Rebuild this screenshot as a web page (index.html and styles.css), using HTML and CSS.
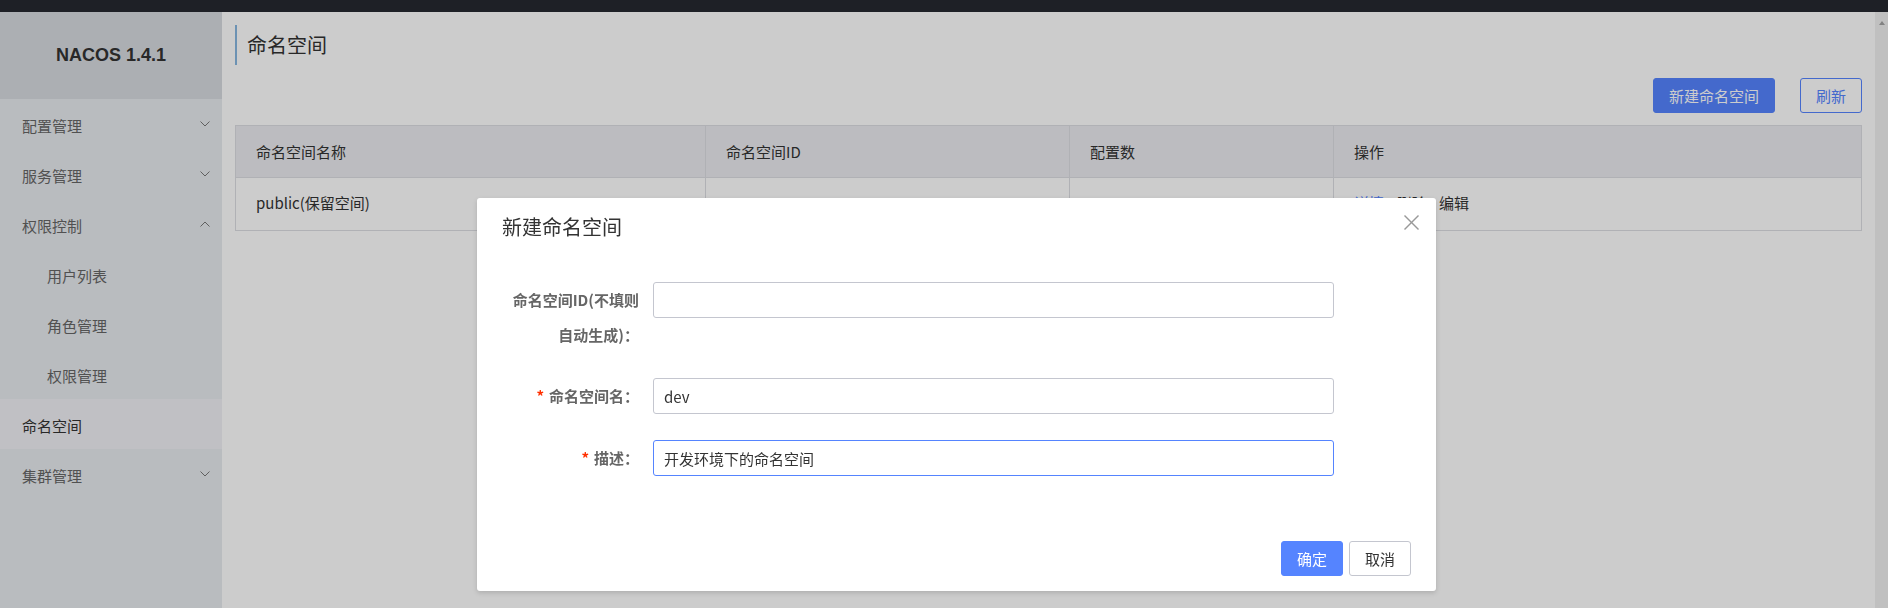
FILE: index.html
```html
<!DOCTYPE html>
<html lang="zh-CN">
<head>
<meta charset="utf-8">
<title>Nacos - 命名空间</title>
<link rel="stylesheet" href="styles.css">
</head>
<body>
<div class="app">
  <div class="topbar"></div>
  <div class="frame">
    <aside class="sidebar">
      <div class="logo">NACOS 1.4.1</div>
      <ul class="menu">
        <li class="menu-item"><span class="menu-label">配置管理</span><svg class="arrow" width="10" height="6" viewBox="0 0 10 6"><polyline points="0.5,0.5 5,5 9.5,0.5"/></svg></li>
        <li class="menu-item"><span class="menu-label">服务管理</span><svg class="arrow" width="10" height="6" viewBox="0 0 10 6"><polyline points="0.5,0.5 5,5 9.5,0.5"/></svg></li>
        <li class="menu-item"><span class="menu-label">权限控制</span><svg class="arrow" width="10" height="6" viewBox="0 0 10 6"><polyline points="0.5,5.5 5,1 9.5,5.5"/></svg></li>
        <li class="menu-item sub"><span class="menu-label">用户列表</span></li>
        <li class="menu-item sub"><span class="menu-label">角色管理</span></li>
        <li class="menu-item sub"><span class="menu-label">权限管理</span></li>
        <li class="menu-item active"><span class="menu-label">命名空间</span></li>
        <li class="menu-item"><span class="menu-label">集群管理</span><svg class="arrow" width="10" height="6" viewBox="0 0 10 6"><polyline points="0.5,0.5 5,5 9.5,0.5"/></svg></li>
      </ul>
    </aside>
    <main class="main">
      <h1 class="page-title">命名空间</h1>
      <div class="toolbar">
        <button class="btn btn-primary">新建命名空间</button>
        <button class="btn btn-outline">刷新</button>
      </div>
      <table class="table">
        <colgroup>
          <col class="col-name">
          <col class="col-id">
          <col class="col-count">
          <col class="col-op">
        </colgroup>
        <thead>
          <tr><th>命名空间名称</th><th>命名空间ID</th><th>配置数</th><th>操作</th></tr>
        </thead>
        <tbody>
          <tr>
            <td>public(保留空间)</td>
            <td></td>
            <td></td>
            <td><span class="op op-link">详情</span><span class="op">删除</span><span class="op">编辑</span></td>
          </tr>
        </tbody>
      </table>
    </main>
    <div class="scrollbar"><span class="scroll-up"></span></div>
  </div>
</div>

<div class="mask"></div>

<div class="dialog" role="dialog">
  <div class="dialog-header">
    <h2 class="dialog-title">新建命名空间</h2>
  </div>
  <button class="dialog-close" aria-label="关闭"><svg width="15" height="15" viewBox="0 0 15 15"><line x1="0.5" y1="0.5" x2="14.5" y2="14.5"/><line x1="14.5" y1="0.5" x2="0.5" y2="14.5"/></svg></button>
  <div class="dialog-body">
    <div class="form-item">
      <label class="form-label">命名空间ID(不填则<br>自动生成)：</label>
      <input class="form-control" type="text" value="">
    </div>
    <div class="form-item">
      <label class="form-label required">命名空间名：</label>
      <input class="form-control" type="text" value="dev">
    </div>
    <div class="form-item">
      <label class="form-label required">描述：</label>
      <input class="form-control focus" type="text" value="开发环境下的命名空间">
    </div>
  </div>
  <div class="dialog-footer">
    <button class="btn btn-primary">确定</button>
    <button class="btn btn-normal">取消</button>
  </div>
</div>
</body>
</html>
```
FILE: styles.css
```css
* { box-sizing: border-box; }

html, body {
  margin: 0;
  padding: 0;
}

body {
  width: 1888px;
  height: 608px;
  overflow: hidden;
  font-family: "Noto Sans CJK SC", "Noto Sans", sans-serif;
  font-size: 15px;
  color: #333;
  background: #fff;
}

.app {
  display: flex;
  flex-direction: column;
  height: 608px;
}

.topbar {
  flex: none;
  height: 12px;
  background: #262830;
}

.frame {
  flex: 1;
  display: flex;
  min-height: 0;
}

/* sidebar */
.sidebar {
  flex: none;
  width: 222px;
  background: #e8ebef;
}

.logo {
  height: 87px;
  background: #d8dbe0;
  display: flex;
  align-items: center;
  justify-content: center;
  font-family: "Liberation Sans", Arial, sans-serif;
  font-weight: bold;
  font-size: 18px;
  color: #333;
}

.menu {
  list-style: none;
  margin: 0;
  padding: 0;
}

.menu-item {
  height: 50px;
  display: flex;
  align-items: center;
  justify-content: space-between;
  padding: 0 12px 0 22px;
  color: #666;
}

.menu-item.sub {
  padding-left: 47px;
}

.menu-item.active {
  background: #f1f0f5;
  color: #333;
}

.menu-label {
  line-height: 46px;
  margin-top: 4px;
}

.arrow polyline {
  fill: none;
  stroke: #777;
  stroke-width: 1;
}

/* main */
.main {
  flex: 1;
  min-width: 0;
  background: #fff;
  padding: 13px 13px 0;
}

.page-title {
  margin: 0;
  height: 40px;
  line-height: 40px;
  border-left: 2px solid #88b7e0;
  padding-left: 10px;
  font-size: 20px;
  font-weight: normal;
  color: #333;
}

.toolbar {
  margin-top: 13px;
  display: flex;
  justify-content: flex-end;
  gap: 25px;
}

.btn {
  height: 35px;
  padding: 0 15px;
  border: 1px solid transparent;
  border-radius: 3px;
  font-family: inherit;
  font-size: 15px;
  line-height: 33px;
  cursor: pointer;
}

.btn-primary {
  background: #5584ff;
  border-color: #5584ff;
  color: #fff;
}

.btn-outline {
  background: #fff;
  border-color: #5584ff;
  color: #5584ff;
}

.btn-normal {
  background: #fff;
  border-color: #c4c6cf;
  color: #333;
}

.table {
  margin-top: 12px;
  width: 100%;
  table-layout: fixed;
  border-collapse: collapse;
  border: 1px solid #dcdee3;
}

.col-name { width: 470px; }
.col-id { width: 364px; }
.col-count { width: 264px; }

.table th,
.table td {
  padding: 0 20px;
  text-align: left;
  border: 1px solid #dcdee3;
  font-size: 15px;
  color: #333;
}

.table th {
  height: 52px;
  padding-bottom: 1px;
  background: #ebecf0;
  font-weight: normal;
}

.table td {
  height: 53px;
  padding-bottom: 4px;
  background: #fff;
}

.op {
  margin-right: 12.5px;
}

.op-link {
  color: #5584ff;
}

/* scrollbar */
.scrollbar {
  flex: none;
  width: 13px;
  background: #f1f1f1;
  display: flex;
  flex-direction: column;
  align-items: center;
}

.scroll-up {
  margin-top: 9px;
  width: 0;
  height: 0;
  border-left: 3.5px solid transparent;
  border-right: 3.5px solid transparent;
  border-bottom: 4px solid #a3a3a3;
}

/* modal */
.mask {
  position: fixed;
  inset: 0;
  background: rgba(0, 0, 0, 0.2);
}

.dialog {
  position: absolute;
  left: 477px;
  top: 198px;
  width: 959px;
  background: #fff;
  border-radius: 3px;
  box-shadow: 0 2px 5px rgba(0, 0, 0, 0.15);
}

.dialog-header {
  padding: 14px 25px 0;
}

.dialog-title {
  margin: 0;
  font-size: 20px;
  line-height: 30px;
  font-weight: normal;
  color: #333;
}

.dialog-close {
  position: absolute;
  top: 17px;
  right: 17px;
  width: 15px;
  height: 15px;
  padding: 0;
  border: 0;
  background: none;
  display: block;
}

.dialog-close svg {
  display: block;
}

.dialog-close line {
  stroke: #999;
  stroke-width: 1.4;
}

.dialog-body {
  padding: 40px 25px 65px;
}

.form-item {
  display: flex;
  align-items: flex-start;
  margin-bottom: 26px;
}

.form-item:last-child {
  margin-bottom: 0;
}

.form-label {
  flex: none;
  width: 151px;
  padding-right: 14px;
  text-align: right;
  line-height: 35px;
  font-size: 15px;
  font-weight: bold;
  color: #666;
}

.form-label.required::before {
  content: "*";
  color: #ff3000;
  margin-right: 5px;
}

.form-control {
  width: 681px;
  height: 36px;
  padding: 0 10px;
  border: 1px solid #c4c6cf;
  border-radius: 3px;
  font-family: inherit;
  font-size: 15px;
  color: #333;
  background: #fff;
  outline: none;
}

.form-control.focus {
  border-color: #5584ff;
}

.dialog-footer {
  display: flex;
  justify-content: flex-end;
  gap: 6px;
  padding: 0 25px 15px;
}
```
